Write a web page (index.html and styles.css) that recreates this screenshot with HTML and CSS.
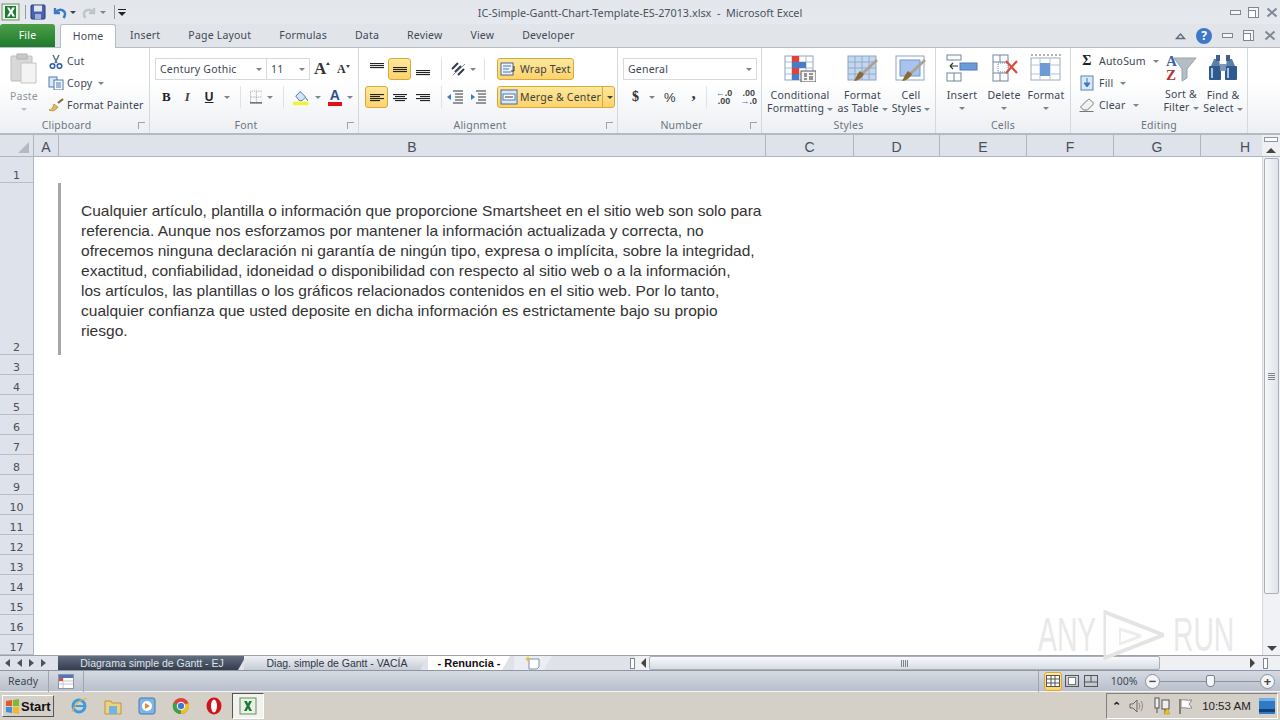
FILE: index.html
```html
<!DOCTYPE html>
<html lang="en">
<head>
    <meta charset="UTF-8">
    <title>IC-Simple-Gantt-Chart-Template-ES-27013.xlsx - Microsoft Excel</title>
    <link rel="stylesheet" href="styles.css">
</head>
<body>
<div class="window">
    <!-- title bar -->
    <div class="titlebar">
        <div class="qat">
            <svg class="excel-logo" width="20" height="18" viewBox="0 0 20 18"><rect x="1" y="1" width="17" height="16" fill="#e8f3e4" stroke="#6f8f6a"/><rect x="4" y="3" width="11" height="12" fill="#1f7a35"/><path d="M6 4.5h2.4l1.4 2.8 1.4-2.8H14l-2.6 4.4 2.7 4.6h-2.5L10 10.500 8.400 13.500H6l2.700-4.600z" fill="#fff"/></svg>
            <span class="qat-sep"></span>
            <svg width="16" height="16" viewBox="0 0 16 16"><rect x="1" y="1" width="14" height="14" rx="1" fill="#4a63b0" stroke="#27397a"/><rect x="4" y="1.500" width="8" height="6" fill="#dfe6f5"/><rect x="5" y="10" width="6" height="5" fill="#9fb0d8"/></svg>
            <svg class="undo" width="15" height="15" viewBox="0 0 15 15"><path d="M3 3v5h5M3.500 7.500C6 4 10.500 3.800 12.500 7c1 2 .5 4-1 6" fill="none" stroke="#3f78c8" stroke-width="2.400"/></svg>
            <span class="caret dark"></span>
            <svg class="gap-left" width="15" height="15" viewBox="0 0 15 15"><path d="M12 3v5H7M11.500 7.500C9 4 4.500 3.800 2.500 7c-1 2-.5 4 1 6" fill="none" stroke="#bcc4cc" stroke-width="2.400"/></svg>
            <span class="caret"></span>
            <span class="qat-sep last"></span>
            <svg width="8" height="7" viewBox="0 0 8 7"><path d="M0 .5h8" stroke="#222"/><path d="M0 3h8L4 7z" fill="#222"/></svg>
        </div>
        <div class="doc-title">IC-Simple-Gantt-Chart-Template-ES-27013.xlsx&nbsp; -&nbsp; Microsoft Excel</div>
        <div class="win-buttons">
            <span class="win-min"></span>
            <span class="win-max"></span>
            <svg width="12" height="11" viewBox="0 0 12 11"><path d="M1.500 1.500l9 8M10.500 1.500l-9 8" stroke="#7c8896" stroke-width="2"/></svg>
        </div>
    </div>

    <!-- ribbon tabs -->
    <div class="tabs">
        <div class="tab file">File</div>
        <div class="tab active">Home</div>
        <div class="tab">Insert</div>
        <div class="tab">Page Layout</div>
        <div class="tab">Formulas</div>
        <div class="tab">Data</div>
        <div class="tab">Review</div>
        <div class="tab">View</div>
        <div class="tab">Developer</div>
        <div class="tab-tools">
            <svg width="11" height="8" viewBox="0 0 11 8"><path d="M1.500 6.500L5.500 2l4 4.500z" fill="none" stroke="#5f6b78" stroke-width="1.400"/></svg>
            <span class="help">?</span>
            <span class="win-min"></span>
            <span class="win-max"></span>
            <svg width="12" height="11" viewBox="0 0 12 11"><path d="M1.500 1.500l9 8M10.500 1.500l-9 8" stroke="#7c8896" stroke-width="2"/></svg>
        </div>
    </div>

    <!-- ribbon -->
    <div class="ribbon">
        <section class="group g-clipboard">
            <div class="group-body">
                <div class="big-btn paste">
                    <svg width="28" height="32" viewBox="0 0 28 32"><rect x="1" y="3" width="21" height="25" rx="1" fill="#d8d8d8" stroke="#bdbdbd"/><rect x="7" y="1" width="10" height="5" fill="#c9c9c9" stroke="#b0b0b0"/><path d="M11 10h15v20H11z" fill="#f3f3f3" stroke="#c4c4c4"/></svg>
                    <span class="big-label muted">Paste</span>
                    <span class="caret"></span>
                </div>
                <div class="small-col">
                    <div class="small-btn">
                        <svg width="14" height="15" viewBox="0 0 14 15"><path d="M4 1l4 8M10 1L6 9" stroke="#5f6f86" stroke-width="1.500"/><circle cx="3.500" cy="12" r="2.300" fill="none" stroke="#2f5fa8" stroke-width="1.600"/><circle cx="10.500" cy="12" r="2.300" fill="none" stroke="#2f5fa8" stroke-width="1.600"/></svg>
                        <span>Cut</span>
                    </div>
                    <div class="small-btn">
                        <svg width="16" height="14" viewBox="0 0 16 14"><rect x="1" y="1" width="8" height="10" fill="#dce8f7" stroke="#4f78b0"/><rect x="6" y="4" width="9" height="10" fill="#f5f9fe" stroke="#4f78b0"/><path d="M8 7h5M8 9h5M8 11h5" stroke="#4f78b0"/></svg>
                        <span>Copy</span><span class="caret"></span>
                    </div>
                    <div class="small-btn">
                        <svg width="16" height="14" viewBox="0 0 16 14"><path d="M10 5l5-4" stroke="#8a6a3a" stroke-width="2.200"/><path d="M1 12c3 0 4-3 5-6l4 3c-2 3-5 5-9 3z" fill="#e3b95a" stroke="#a3813a" stroke-width=".7"/></svg>
                        <span>Format Painter</span>
                    </div>
                </div>
            </div>
            <div class="group-label launch-pad">Clipboard<span class="launcher"></span></div>
        </section>

        <section class="group g-font">
            <div class="group-body stacked">
                <div class="tool-row">
                    <div class="combo font-name"><span>Century Gothic</span><span class="caret"></span></div>
                    <div class="combo font-size"><span>11</span><span class="caret"></span></div>
                    <span class="grow-a big">A<sup class="tick up"></sup></span>
                    <span class="grow-a small">A<sup class="tick"></sup></span>
                </div>
                <div class="tool-row font-tools">
                    <span class="fmt bold">B</span>
                    <span class="fmt italic">I</span>
                    <span class="fmt under">U</span><span class="caret"></span>
                    <span class="sep"></span>
                    <svg width="14" height="14" viewBox="0 0 14 14"><rect x=".5" y=".5" width="13" height="13" fill="none" stroke="#999" stroke-dasharray="1 1"/><path d="M7 1v12M1 7h12" stroke="#999" stroke-dasharray="1 1"/><path d="M0 13.500h14" stroke="#222"/></svg>
                    <span class="caret"></span>
                    <span class="sep"></span>
                    <svg width="18" height="17" viewBox="0 0 18 17"><path d="M3 7l5-5 6 6-4 4H7z" fill="#d5e4f5" stroke="#3f6ea8"/><path d="M14 9c1 1 2 2 2 3" stroke="#3f6ea8"/><rect x="0" y="13" width="17" height="4" fill="#f5f03a"/></svg>
                    <span class="caret"></span>
                    <span class="font-color">A</span>
                    <span class="caret"></span>
                </div>
            </div>
            <div class="group-label launch-pad">Font<span class="launcher"></span></div>
        </section>

        <section class="group g-align">
            <div class="group-body stacked">
                <div class="tool-row align-row">
                    <span class="icon-btn"><span class="lines top"><i></i><i></i><i></i></span></span>
                    <span class="icon-btn on"><span class="lines"><i></i><i></i><i></i></span></span>
                    <span class="icon-btn"><span class="lines bottom"><i></i><i></i><i></i></span></span>
                    <span class="sep"></span>
                    <svg class="orient" width="18" height="16" viewBox="0 0 18 16"><path d="M2 8l6-6M5 11l6-6M8 14l6-6" stroke="#333a48" stroke-width="2"/><path d="M3 14L15 3" stroke="#5b6b80" stroke-width=".8"/></svg>
                    <span class="caret"></span>
                    <span class="sep push"></span>
                    <div class="wide-btn on wrap">
                        <svg width="18" height="16" viewBox="0 0 18 16"><rect x="1" y="2" width="12" height="12" fill="#eef3fa" stroke="#51688a"/><path d="M3 5h8M3 8h6M3 11h8" stroke="#3e7bc4"/><path d="M14 5v5h-3" fill="none" stroke="#333"/></svg>
                        <span>Wrap Text</span>
                    </div>
                </div>
                <div class="tool-row align-row">
                    <span class="icon-btn on"><span class="lines left"><i></i><i></i><i></i><i></i></span></span>
                    <span class="icon-btn"><span class="lines center"><i></i><i></i><i></i><i></i></span></span>
                    <span class="icon-btn"><span class="lines right"><i></i><i></i><i></i><i></i></span></span>
                    <span class="sep tight"></span>
                    <svg width="18" height="14" viewBox="0 0 18 14"><path d="M7 1h10M9 4h8M9 7h8M9 10h8M7 13h10" stroke="#333"/><path d="M1 7l4-3v6z" fill="#3f78c8"/></svg>
                    <svg class="indent" width="18" height="14" viewBox="0 0 18 14"><path d="M7 1h10M9 4h8M9 7h8M9 10h8M7 13h10" stroke="#333"/><path d="M6 7L2 4v6z" fill="#3f78c8"/></svg>
                    <div class="wide-btn on merge">
                        <svg width="18" height="16" viewBox="0 0 18 16"><rect x="1" y="1" width="16" height="14" fill="#dce8f7" stroke="#51688a"/><rect x="3" y="5" width="12" height="6" fill="#fff" stroke="#3e7bc4"/><path d="M5 8h8" stroke="#333"/></svg>
                        <span>Merge &amp; Center</span>
                        <span class="split"><span class="caret dark"></span></span>
                    </div>
                </div>
            </div>
            <div class="group-label launch-pad">Alignment<span class="launcher"></span></div>
        </section>

        <section class="group g-number">
            <div class="group-body stacked">
                <div class="tool-row">
                    <div class="combo number-format"><span>General</span><span class="caret"></span></div>
                </div>
                <div class="tool-row number-tools">
                    <span class="num-sym dollar">$</span><span class="caret"></span>
                    <span class="num-sym percent">%</span>
                    <span class="num-sym comma">,</span>
                    <span class="sep"></span>
                    <span class="decimal"><b class="arrow">&larr;</b>.0<br>.00</span>
                    <span class="decimal">.00<br><b class="arrow">&rarr;</b>.0</span>
                </div>
            </div>
            <div class="group-label launch-pad">Number<span class="launcher"></span></div>
        </section>

        <section class="group g-styles">
            <div class="group-body big-row">
                <div class="big-btn cond">
                    <svg width="32" height="28" viewBox="0 0 32 28"><rect x="1" y="2" width="28" height="24" fill="#fff" stroke="#8ba4c4"/><path d="M1 8h28M1 14h28M1 20h28M8 2v24M15 2v24M22 2v24" stroke="#a8bcd6"/><rect x="8" y="2" width="7" height="6" fill="#e0413a"/><rect x="8" y="8" width="14" height="6" fill="#4a7cc4"/><rect x="8" y="14" width="7" height="6" fill="#e0413a"/><rect x="8" y="20" width="7" height="6" fill="#4a7cc4"/><rect x="17" y="17" width="15" height="11" fill="#f3f3f3" stroke="#555"/><path d="M20 20h3M20 22h3M20 25h3M25 20h4M25 23h4M25 25h4" stroke="#333"/></svg>
                    <span class="big-label">Conditional<br>Formatting <span class="caret"></span></span>
                </div>
                <div class="big-btn table">
                    <svg width="32" height="28" viewBox="0 0 32 28"><rect x="1" y="2" width="28" height="24" fill="#c4d7ef" stroke="#8ba4c4"/><path d="M1 8h28M1 14h28M1 20h28M8 2v24M15 2v24M22 2v24" stroke="#8faacb"/><path d="M31 7L16 21l-2-2L29 5z" fill="#b0a090"/><path d="M17 20c-2 4-6 7-10 7 2-3 3-7 6-10z" fill="#8a6a32"/></svg>
                    <span class="big-label">Format<br>as Table <span class="caret"></span></span>
                </div>
                <div class="big-btn cell-styles">
                    <svg width="32" height="28" viewBox="0 0 32 28"><rect x="1" y="2" width="28" height="24" fill="#fff" stroke="#8ba4c4"/><rect x="5" y="6" width="20" height="16" fill="#a8c4ee" stroke="#6f94cc"/><path d="M31 7L16 21l-2-2L29 5z" fill="#b0a090"/><path d="M17 20c-2 4-6 7-10 7 2-3 3-7 6-10z" fill="#8a6a32"/></svg>
                    <span class="big-label">Cell<br>Styles <span class="caret"></span></span>
                </div>
            </div>
            <div class="group-label">Styles</div>
        </section>

        <section class="group g-cells">
            <div class="group-body big-row">
                <div class="big-btn cell-btn">
                    <svg width="32" height="28" viewBox="0 0 32 28"><rect x="1" y="1" width="14" height="5" fill="#fff" stroke="#70859e"/><rect x="1" y="19" width="14" height="8" fill="#fff" stroke="#70859e"/><path d="M8 19v8" stroke="#70859e"/><rect x="14" y="9" width="17" height="7" fill="#6d9bd8" stroke="#517bb2"/><path d="M4 12h8M4 12l3-3M4 12l3 3" fill="none" stroke="#333" stroke-width="1.200"/></svg>
                    <span class="big-label">Insert</span>
                    <span class="caret"></span>
                </div>
                <div class="big-btn cell-btn">
                    <svg width="32" height="28" viewBox="0 0 32 28"><rect x="5" y="1" width="15" height="26" fill="#fff" stroke="#70859e"/><path d="M5 8h15M5 19h15M12 19v8M12 1v7" stroke="#70859e"/><rect x="10" y="9" width="10" height="9" fill="#fff" stroke="#5b8ac8" stroke-dasharray="1 1"/><path d="M18 7l11 12M29 7L18 19" stroke="#e04a3a" stroke-width="2.200"/></svg>
                    <span class="big-label">Delete</span>
                    <span class="caret"></span>
                </div>
                <div class="big-btn cell-btn">
                    <svg width="32" height="28" viewBox="0 0 32 28"><path d="M1 1h30" stroke="#666" stroke-dasharray="2 2"/><rect x="1" y="4" width="29" height="22" fill="#fff" stroke="#9aaabb"/><path d="M1 11h29M1 20h29M10 4v22M20 4v22" stroke="#b6c3d2"/><rect x="10" y="9" width="10" height="13" fill="#6d9bd8"/></svg>
                    <span class="big-label">Format</span>
                    <span class="caret"></span>
                </div>
            </div>
            <div class="group-label">Cells</div>
        </section>

        <section class="group g-editing">
            <div class="group-body">
                <div class="small-col edit-col">
                    <div class="small-btn">
                        <span class="sigma">&Sigma;</span><span>AutoSum</span><span class="caret"></span>
                    </div>
                    <div class="small-btn">
                        <svg width="14" height="16" viewBox="0 0 14 16"><rect x="1" y="1" width="12" height="14" fill="#dce8f7" stroke="#5b84ba"/><path d="M7 3v6M4 8h6l-3 4z" fill="#3f78c8" stroke="#3f78c8"/></svg>
                        <span>Fill</span><span class="caret"></span>
                    </div>
                    <div class="small-btn">
                        <svg width="15" height="14" viewBox="0 0 15 14"><path d="M1 9l7-7c1-1 2-1 3 0l2 2c1 1 1 2 0 3l-5 5H4z" fill="#f1f1f1" stroke="#777"/><path d="M0 13.500h14" stroke="#777"/></svg>
                        <span>Clear</span><span class="caret"></span>
                    </div>
                </div>
                <div class="big-btn sort">
                    <svg width="32" height="30" viewBox="0 0 32 30"><path d="M9 5h22l-9 11v9l-5 3V16z" fill="#b4bcc4" stroke="#9aa3ac"/><text x="1" y="13" class="az a">A</text><text x="1" y="27" class="az z">Z</text></svg>
                    <span class="big-label">Sort &amp;<br>Filter <span class="caret"></span></span>
                </div>
                <div class="big-btn find">
                    <svg width="30" height="28" viewBox="0 0 30 28"><path d="M3 12l3-7h5l1 7zM18 12l1-7h5l3 7z" fill="#5d7fa8"/><rect x="8" y="1" width="4" height="6" fill="#3f5f8a"/><rect x="18" y="1" width="4" height="6" fill="#3f5f8a"/><rect x="1" y="12" width="12" height="14" rx="1" fill="#2f5a8e"/><rect x="17" y="12" width="12" height="14" rx="1" fill="#2f5a8e"/><rect x="12" y="10" width="6" height="7" fill="#7d97b8"/><path d="M4 14v10M20 14v10" stroke="#a8c4e4" stroke-width="2"/></svg>
                    <span class="big-label">Find &amp;<br>Select <span class="caret"></span></span>
                </div>
            </div>
            <div class="group-label">Editing</div>
        </section>
    </div>

    <!-- column headers -->
    <div class="col-headers">
        <div class="corner"><span class="corner-mark"></span></div>
        <div class="col col-a">A</div>
        <div class="col col-b">B</div>
        <div class="col col-c">C</div>
        <div class="col col-d">D</div>
        <div class="col col-e">E</div>
        <div class="col col-f">F</div>
        <div class="col col-g">G</div>
        <div class="col col-h">H</div>
        <div class="v-scroll-head"><span class="split-bar"></span><span class="arrow-up"></span></div>
    </div>

    <!-- sheet -->
    <div class="sheet-area">
        <div class="row-headers">
            <div class="rh r1">1</div>
            <div class="rh r2">2</div>
            <div class="rh">3</div>
            <div class="rh">4</div>
            <div class="rh">5</div>
            <div class="rh">6</div>
            <div class="rh">7</div>
            <div class="rh">8</div>
            <div class="rh">9</div>
            <div class="rh">10</div>
            <div class="rh">11</div>
            <div class="rh">12</div>
            <div class="rh">13</div>
            <div class="rh">14</div>
            <div class="rh">15</div>
            <div class="rh">16</div>
            <div class="rh">17</div>
        </div>
        <div class="cells">
            <div class="disclaimer">
                Cualquier artículo, plantilla o información que proporcione Smartsheet en el sitio web son solo para<br>
                referencia. Aunque nos esforzamos por mantener la información actualizada y correcta, no<br>
                ofrecemos ninguna declaración ni garantía de ningún tipo, expresa o implícita, sobre la integridad,<br>
                exactitud, confiabilidad, idoneidad o disponibilidad con respecto al sitio web o a la información,<br>
                los artículos, las plantillas o los gráficos relacionados contenidos en el sitio web. Por lo tanto,<br>
                cualquier confianza que usted deposite en dicha información es estrictamente bajo su propio<br>
                riesgo.
            </div>
        </div>
        <div class="v-scroll">
            <div class="v-thumb"><span class="grip"></span></div>
            <span class="arrow-down"></span>
        </div>
        <div class="watermark">
            <span>ANY</span>
            <svg width="130" height="52" viewBox="0 0 130 52"><path d="M14 3l100 23L14 49z" fill="none" stroke="#e4e4e4" stroke-width="4"/><path d="M40 20l36 7-36 8z" fill="none" stroke="#ececec" stroke-width="3"/></svg>
            <span>RUN</span>
        </div>
    </div>

    <!-- sheet tabs and horizontal scroll -->
    <div class="sheet-tabs">
        <div class="tab-nav">
            <span class="nav first"></span>
            <span class="nav prev"></span>
            <span class="nav next"></span>
            <span class="nav last"></span>
        </div>
        <div class="stab dark">Diagrama simple de Gantt - EJ</div>
        <div class="stab light">Diag. simple de Gantt - VACÍA</div>
        <div class="stab current">- Renuncia -</div>
        <div class="stab new-sheet">
            <svg width="16" height="14" viewBox="0 0 16 14"><path d="M4 3h10v8l-2 2H4z" fill="#fff" stroke="#7f93ab"/><path d="M3 0l1 2 2 1-2 1-1 2-1-2-2-1 2-1z" fill="#e8b93a"/></svg>
        </div>
        <div class="tab-fill"><span class="split-handle"></span></div>
        <div class="h-scroll">
            <span class="arrow-left"></span>
            <div class="h-thumb"><span class="grip-v"></span></div>
            <span class="h-track"></span>
            <span class="arrow-right"></span>
            <span class="split-handle"></span>
        </div>
    </div>

    <!-- status bar -->
    <div class="statusbar">
        <span class="status-text">Ready</span>
        <span class="status-sep"></span>
        <svg class="macro" width="16" height="15" viewBox="0 0 16 15"><rect x=".5" y=".5" width="15" height="14" fill="#fff" stroke="#8a97a8"/><rect x="1" y="1" width="14" height="3" fill="#4f78b0"/><path d="M5 4v10M1 7h14M1 10h14" stroke="#c0c8d4"/><rect x="1" y="4" width="4" height="3" fill="#e04a3a"/></svg>
        <span class="status-sep"></span>
        <span class="status-spring"></span>
        <span class="status-sep"></span>
        <span class="view-btn on"><svg width="14" height="12" viewBox="0 0 14 12"><rect x=".5" y=".5" width="13" height="11" fill="#fff" stroke="#555"/><path d="M5 0v12M9 0v12M0 4h14M0 8h14" stroke="#555"/></svg></span>
        <span class="view-btn"><svg width="14" height="12" viewBox="0 0 14 12"><rect x=".5" y=".5" width="13" height="11" fill="none" stroke="#555"/><rect x="3.500" y="2.500" width="7" height="7" fill="#fff" stroke="#777"/></svg></span>
        <span class="view-btn"><svg width="14" height="12" viewBox="0 0 14 12"><rect x=".5" y=".5" width="13" height="11" fill="none" stroke="#555"/><path d="M7 0v7M0 7h14" stroke="#555"/></svg></span>
        <span class="zoom-text">100%</span>
        <span class="zoom-round">&minus;</span>
        <span class="zoom-slider"><span class="zoom-thumb"></span></span>
        <span class="zoom-round">+</span>
    </div>

    <!-- windows taskbar -->
    <div class="taskbar">
        <div class="start">
            <svg width="15" height="15" viewBox="0 0 15 15"><path d="M1 2l6-1v6H1z" fill="#e8562a"/><path d="M8 1l6-1v7H8z" fill="#7fba2a"/><path d="M1 8h6v6l-6-1z" fill="#3f8ee0"/><path d="M8 8h6v7l-6-1z" fill="#f0b92a"/></svg>
            <span>Start</span>
        </div>
        <div class="launch">
            <svg width="18" height="18" viewBox="0 0 18 18"><circle cx="9" cy="9" r="6" fill="none" stroke="#3f9be0" stroke-width="3"/><path d="M4 9h10" stroke="#3f9be0" stroke-width="2"/><path d="M2 15C6 5 12 1 17 2" fill="none" stroke="#e8b93a" stroke-width="1.200"/></svg>
            <svg width="18" height="18" viewBox="0 0 18 18"><path d="M1 4h6l1 2h9v11H1z" fill="#f0d27a" stroke="#b8954a"/><rect x="5" y="9" width="8" height="8" fill="#6fb4e4"/></svg>
            <svg width="18" height="18" viewBox="0 0 18 18"><rect x="1" y="1" width="16" height="16" rx="2" fill="#7fb4e8" stroke="#4a78b0"/><circle cx="9" cy="9" r="5" fill="#fff"/><path d="M7 6l5 3-5 3z" fill="#e8892a"/></svg>
            <svg width="18" height="18" viewBox="0 0 18 18"><circle cx="9" cy="9" r="8" fill="#e0413a"/><path d="M9 9L16.500 6A8 8 0 0 1 9 17z" fill="#e8c32a"/><path d="M9 9L9 17A8 8 0 0 1 1.500 5.500z" fill="#3fa04a"/><circle cx="9" cy="9" r="3.800" fill="#3f78d0" stroke="#fff"/></svg>
            <svg width="16" height="18" viewBox="0 0 16 18"><ellipse cx="8" cy="9" rx="7.500" ry="8.500" fill="#d0141c"/><ellipse cx="8" cy="9" rx="3" ry="6.500" fill="#fff"/></svg>
            <div class="task-item">
                <svg width="18" height="18" viewBox="0 0 18 18"><rect x="1" y="1" width="16" height="16" fill="#e8f3e4" stroke="#5f8f5a"/><path d="M5 4h2.800L9 6.500 10.300 4H13l-2.600 5 2.700 5h-2.700L9 11.500 7.600 14H5l2.600-5z" fill="#1f7a35"/></svg>
            </div>
        </div>
        <div class="tray">
            <span class="tray-up">&#8963;</span>
            <svg width="16" height="16" viewBox="0 0 16 16"><path d="M1 6h3l4-4v12l-4-4H1z" fill="none" stroke="#666"/><path d="M10 5c1 2 1 4 0 6M12 3c2 3 2 7 0 10" fill="none" stroke="#888"/></svg>
            <svg width="16" height="18" viewBox="0 0 16 18"><rect x="1" y="1" width="4" height="10" fill="#eee" stroke="#555"/><rect x="8" y="3" width="7" height="9" fill="#eee" stroke="#555"/><path d="M3 11v5M11 12v4" stroke="#555"/><path d="M10 17l3-6 3 6z" fill="#f0c22a" stroke="#a88a1a" stroke-width=".5"/></svg>
            <svg width="16" height="16" viewBox="0 0 16 16"><path d="M2 1v15" stroke="#666" stroke-width="1.500"/><path d="M3 2c4-1 6 1 11 0l-3 4 3 4c-5 1-7-1-11 0z" fill="#fff" stroke="#888"/></svg>
            <span class="clock">10:53 AM</span>
            <svg class="show-desk" width="16" height="16" viewBox="0 0 16 16"><rect width="16" height="16" fill="#2f7ac4"/><rect y="11" width="16" height="3" fill="#123f78"/><rect y="0" width="16" height="3" fill="#6fb0e4"/></svg>
        </div>
    </div>
</div>
</body>
</html>
```

FILE: styles.css
```css
* {
    box-sizing: border-box;
}
html, body {
    margin: 0;
    height: 720px;
    overflow: hidden;
}
body {
    background: #fff;
    font-family: "Noto Sans", sans-serif;
    font-size: 11px;
    color: #3c4654;
}
.window {
    width: 1280px;
    height: 720px;
    display: flex;
    flex-direction: column;
}

/* shared small bits */
.caret {
    display: inline-block;
    width: 0;
    height: 0;
    border-left: 3px solid transparent;
    border-right: 3px solid transparent;
    border-top: 3px solid #7b8590;
    vertical-align: middle;
}
.caret.dark {
    border-top-color: #39424e;
}
.sep {
    width: 1px;
    height: 22px;
    background: #dfe3e8;
}

/* title bar */
.titlebar {
    height: 24px;
    display: flex;
    align-items: center;
    background: linear-gradient(#e3e7ec, #e6e9ee);
}
.qat {
    width: 210px;
    display: flex;
    align-items: center;
    gap: 3px;
    padding-left: 1px;
}
.qat-sep {
    width: 1px;
    height: 14px;
    background: #8f99a5;
    margin: 0 1px;
}
.qat-sep.last {
    margin: 0 0 0 5px;
}
.undo {
    margin-left: 3px;
}
.gap-left {
    margin-left: 3px;
}
.doc-title {
    flex: 1;
    text-align: center;
    font-size: 10.800px;
    color: #4a525e;
}
.win-buttons {
    width: 210px;
    display: flex;
    justify-content: flex-end;
    align-items: center;
    gap: 7px;
    padding-right: 2px;
}
.win-min {
    width: 11px;
    height: 5px;
    border: 1px solid #7c8896;
    background: #f4f6f8;
}
.win-max {
    width: 11px;
    height: 11px;
    border: 1px solid #7c8896;
    background: #f4f6f8;
    position: relative;
}
.win-max::after {
    content: "";
    position: absolute;
    left: 0;
    bottom: 0;
    width: 6px;
    height: 6px;
    border-top: 1px solid #7c8896;
    border-right: 1px solid #7c8896;
    background: #fff;
}

/* ribbon tabs */
.tabs {
    height: 24px;
    display: flex;
    align-items: flex-end;
    background: #e1e5ea;
    border-bottom: 1px solid #b7bdc5;
}
.tab {
    height: 23px;
    line-height: 23px;
    padding: 0 14px;
    font-size: 10.500px;
    letter-spacing: .2px;
    color: #3f4955;
}
.tab.file {
    width: 55px;
    padding: 0;
    margin-right: 5px;
    text-align: center;
    color: #fff;
    border-radius: 3px 3px 0 0;
    background: linear-gradient(#4e9e4a, #1d7a2c);
}
.tab.active {
    width: 56px;
    padding: 0;
    margin-right: 0;
    margin-bottom: -1px;
    height: 24px;
    text-align: center;
    background: #fff;
    border: 1px solid #b7bdc5;
    border-bottom: none;
    border-radius: 3px 3px 0 0;
}
.tab-tools {
    margin-left: auto;
    height: 23px;
    display: flex;
    align-items: center;
    gap: 10px;
    padding-right: 4px;
}
.help {
    width: 16px;
    height: 16px;
    border-radius: 50%;
    background: #3f78c8;
    color: #fff;
    font-size: 12px;
    font-weight: 700;
    line-height: 16px;
    text-align: center;
}

/* ribbon */
.ribbon {
    height: 87px;
    display: flex;
    background: linear-gradient(#fff 40%, #eceff3);
    border-bottom: 2px solid #b4bac2;
}
.group {
    display: flex;
    flex-direction: column;
    border-right: 1px solid #d5d9de;
}
.group-body {
    height: 71px;
    display: flex;
}
.group-label {
    height: 14px;
    line-height: 13px;
    text-align: center;
    font-size: 10.500px;
    letter-spacing: .2px;
    color: #6a7480;
    position: relative;
}
.launch-pad {
    padding-right: 16px;
}
.launcher {
    position: absolute;
    right: 4px;
    top: 3px;
    width: 7px;
    height: 7px;
    border: 1px solid #9aa4b0;
    border-width: 1px 0 0 1px;
}
.g-clipboard { width: 150px; }
.g-font { width: 209px; }
.g-align { width: 259px; }
.g-number { width: 144px; }
.g-styles { width: 174px; }
.g-cells { width: 135px; }
.g-editing { width: 177px; border-right: 1px solid #d5d9de; }

.stacked {
    flex-direction: column;
    gap: 6px;
    padding-top: 10px;
}
.tool-row {
    height: 22px;
    display: flex;
    align-items: center;
}

.big-btn {
    display: flex;
    flex-direction: column;
    align-items: center;
}
.big-label {
    text-align: center;
    line-height: 13px;
    font-size: 10.500px;
    letter-spacing: .2px;
    white-space: nowrap;
}
.big-label.muted {
    color: #8d949d;
}
.paste {
    width: 48px;
    padding-top: 5px;
}
.paste svg {
    margin-bottom: 5px;
}
.paste .caret {
    margin-top: 5px;
    border-top-color: #b9bec4;
}
.small-col {
    display: flex;
    flex-direction: column;
    gap: 6px;
    padding-top: 5px;
}
.small-btn {
    height: 16px;
    display: flex;
    align-items: center;
    gap: 3px;
    white-space: nowrap;
    font-size: 10.500px;
    letter-spacing: .2px;
}
.small-btn svg {
    width: 16px;
}
.small-btn .caret {
    margin-left: 3px;
}

/* font group */
.g-font .tool-row {
    padding-left: 5px;
}
.combo {
    height: 22px;
    display: flex;
    align-items: center;
    justify-content: space-between;
    padding: 0 4px;
    border: 1px solid #d6dae0;
    background: #fff;
    font-size: 10.500px;
    letter-spacing: .2px;
}
.font-name { width: 112px; }
.font-size { width: 44px; margin-left: -1px; }
.grow-a {
    font-family: "Liberation Serif", serif;
    font-weight: 700;
    color: #333;
    display: flex;
}
.grow-a.big {
    font-size: 17px;
    margin-left: 4px;
    width: 20px;
}
.grow-a.small {
    font-size: 12px;
    margin-left: 3px;
}
.tick {
    width: 0;
    height: 0;
    margin-top: 3px;
    border-left: 2.500px solid transparent;
    border-right: 2.500px solid transparent;
    border-top: 3px solid #3c4654;
}
.tick.up {
    border-top: none;
    border-bottom: 3px solid #3c4654;
}
.g-font .font-tools {
    gap: 0;
    padding-left: 6px;
}
.fmt {
    width: 23px;
    text-align: center;
    font-family: "Liberation Serif", serif;
    font-size: 13px;
    color: #222;
}
.fmt.bold { font-weight: 700; }
.fmt.italic { font-style: italic; font-weight: 700; color: #444; }
.fmt.under { text-decoration: underline; font-weight: 700; font-family: "Liberation Sans", sans-serif; font-size: 12px; padding-left: 2px; }
.font-tools .caret { margin: 0 5px; }
.font-tools .sep { margin: 0 9px 0 5px; }
.font-color {
    width: 16px;
    margin-left: 2px;
    border-bottom: 4px solid #e0101c;
    line-height: 13px;
    text-align: center;
    font-family: "Liberation Sans", sans-serif;
    font-weight: 700;
    font-size: 14px;
    color: #2f4f8e;
}

/* alignment group */
.align-row {
    padding-left: 6px;
}
.icon-btn {
    width: 23px;
    height: 22px;
    display: flex;
    align-items: center;
    justify-content: center;
    border: 1px solid transparent;
}
.on {
    border: 1px solid #d8a93a;
    border-radius: 3px;
    background: linear-gradient(#fde89c, #fcd36a);
}
.lines {
    width: 14px;
    height: 12px;
    display: flex;
    flex-direction: column;
    gap: 1px;
    justify-content: center;
    align-items: center;
}
.lines.top { justify-content: flex-start; }
.lines.bottom { justify-content: flex-end; }
.lines.left { align-items: flex-start; }
.lines.right { align-items: flex-end; }
.lines i {
    display: block;
    width: 14px;
    height: 1px;
    background: #222;
    box-shadow: 0 1px 0 rgba(0, 0, 0, .1);
}
.lines.left i:nth-child(even),
.lines.center i:nth-child(even),
.lines.right i:nth-child(even) {
    width: 10px;
}
.align-row .sep { margin: 0 7px; }
.align-row .sep.tight { margin: 0 4px 0 7px; }
.align-row .caret { margin-left: 2px; }
.orient { margin-left: 1px; }
.align-row .sep.push { margin: 0 12px 0 8px; }
.indent { margin-left: 5px; }
.wide-btn {
    height: 22px;
    display: flex;
    align-items: center;
    gap: 2px;
    padding-left: 2px;
    font-size: 10.500px;
    letter-spacing: .2px;
    color: #3a3f48;
    white-space: nowrap;
}
.wrap {
    width: 77px;
}
.merge {
    width: 118px;
    margin-left: 10px;
    position: relative;
}
.split {
    position: absolute;
    right: 0;
    top: 0;
    bottom: 0;
    width: 12px;
    border-left: 1px solid #d8a93a;
    display: flex;
    align-items: center;
    justify-content: center;
}

/* number group */
.g-number .tool-row {
    padding-left: 5px;
}
.number-format {
    width: 134px;
}
.num-sym {
    font-family: "Liberation Serif", serif;
    font-size: 14px;
    font-weight: 700;
    color: #333;
}
.dollar { margin-left: 9px; }
.number-tools .caret { margin: 0 0 0 10px; }
.percent { margin-left: 9px; font-weight: 400; font-family: "Liberation Sans", sans-serif; font-size: 13px; }
.comma { margin-left: 16px; margin-top: -7px; font-size: 17px; }
.number-tools .sep { margin: 0 5px 0 10px; }
.decimal {
    width: 26px;
    font-size: 9px;
    line-height: 8px;
    font-weight: 700;
    font-family: "Liberation Sans", sans-serif;
    color: #444;
    text-align: center;
}
.arrow { color: #3f78c8; }

/* large button groups */
.big-row {
    padding-top: 6px;
}
.big-btn svg {
    flex: none;
}
.cond { width: 72px; margin-left: 2px; padding-top: 0; }
.table { width: 53px; margin-left: 0; }
.cell-styles { width: 44px; margin-left: 0; }
.cond .big-label, .table .big-label, .cell-styles .big-label,
.sort .big-label, .find .big-label, .cell-btn .big-label {
    margin-top: 7px;
}
.cell-btn {
    width: 42px;
}
.g-cells .big-row {
    padding-left: 5px;
}
.cell-btn .caret {
    margin-top: 5px;
}
.edit-col {
    width: 89px;
    padding-left: 8px;
}
.edit-col .small-btn {
    gap: 4px;
}
.sigma {
    width: 16px;
    font-family: "Liberation Serif", serif;
    font-weight: 700;
    font-size: 14px;
    color: #222;
    text-align: center;
}
.sort {
    width: 42px;
    padding-top: 5px;
}
.find {
    width: 42px;
    padding-top: 6px;
}
.sort .big-label {
    margin-top: 5px;
}
.az {
    font-family: "Liberation Serif", serif;
    font-weight: 700;
    font-size: 15px;
}
.az.a { fill: #3f5fa8; }
.az.z { fill: #b0342c; }

/* column headers */
.col-headers {
    height: 22px;
    display: flex;
    background: #dee2ea;
    border-bottom: 1px solid #b0b6bf;
    font-family: "Liberation Sans", sans-serif;
    font-size: 14px;
    color: #4a4f58;
}
.corner {
    width: 34px;
    border-right: 1px solid #b0b6bf;
    position: relative;
}
.corner-mark {
    position: absolute;
    right: 4px;
    bottom: 3px;
    width: 0;
    height: 0;
    border-left: 11px solid transparent;
    border-bottom: 11px solid #b5bac2;
}
.col {
    line-height: 24px;
    text-align: center;
    border-right: 1px solid #b0b6bf;
}
.col-a { width: 25px; }
.col-b { width: 707px; }
.col-c { width: 88px; }
.col-d { width: 86px; }
.col-e { width: 87px; }
.col-f { width: 87px; }
.col-g { width: 87px; }
.col-h { width: 61px; border-right: none; text-align: right; padding-right: 12px; }
.v-scroll-head {
    width: 18px;
    background: #eef0f4;
    display: flex;
    flex-direction: column;
    align-items: center;
    padding-top: 2px;
    gap: 6px;
}
.split-bar {
    width: 14px;
    height: 5px;
    border: 1px solid #9098a2;
    background: #fff;
}
.arrow-up {
    width: 0;
    height: 0;
    border-left: 5px solid transparent;
    border-right: 5px solid transparent;
    border-bottom: 5px solid #444;
}

/* sheet */
.sheet-area {
    height: 498px;
    display: flex;
    position: relative;
    background: #fff;
}
.row-headers {
    width: 34px;
    background: #dee2ea;
    border-right: 1px solid #b0b6bf;
    display: flex;
    flex-direction: column;
    font-family: "DejaVu Sans", sans-serif;
    font-size: 11px;
    color: #4a4f58;
}
.rh {
    height: 20px;
    flex: none;
    display: flex;
    align-items: flex-end;
    justify-content: center;
    border-bottom: 1px solid #b8bec7;
}
.rh.r1 { height: 26px; }
.rh.r2 { height: 172px; }
.cells {
    flex: 1;
    padding: 26px 0 0 24px;
}
.disclaimer {
    height: 172px;
    padding: 18px 0 0 20px;
    border-left: 3px solid #a6a6a6;
    font-family: "Liberation Sans", sans-serif;
    font-size: 15.530px;
    line-height: 20px;
    color: #333;
    white-space: nowrap;
}
.v-scroll {
    width: 18px;
    margin-right: 0;
    background: #f0f2f5;
    border-left: 1px solid #d6dae0;
    display: flex;
    flex-direction: column;
    align-items: center;
    justify-content: space-between;
    padding: 1px 0 4px;
}
.v-thumb {
    width: 15px;
    height: 436px;
    border: 1px solid #a8b0ba;
    border-radius: 2px;
    background: linear-gradient(90deg, #f6f7f9, #e0e4ea);
    display: flex;
    align-items: center;
    justify-content: center;
}
.grip {
    width: 7px;
    height: 7px;
    background: repeating-linear-gradient(#7a828c 0 1px, transparent 1px 2px);
}
.arrow-down {
    width: 0;
    height: 0;
    border-left: 5px solid transparent;
    border-right: 5px solid transparent;
    border-top: 5px solid #444;
}
/* stock browser watermark, squeezed to the narrow lettering */
.watermark {
    position: absolute;
    left: 1038px;
    top: 452px;
    display: flex;
    align-items: center;
    gap: 0;
    font-family: "Liberation Sans", sans-serif;
    font-size: 48px;
    line-height: 48px;
    color: #e9e9e9;
    transform: scaleX(.59);
    transform-origin: left center;
}

/* sheet tabs */
.sheet-tabs {
    height: 15px;
    display: flex;
    align-items: stretch;
    background: #dfe3e9;
    border-top: 1px solid #9aa2ac;
    font-family: "Liberation Sans", sans-serif;
    font-size: 10.500px;
}
.tab-nav {
    width: 58px;
    display: flex;
    align-items: center;
    gap: 7px;
    padding-left: 5px;
}
.nav {
    width: 0;
    height: 0;
    border-top: 4px solid transparent;
    border-bottom: 4px solid transparent;
}
.nav.first, .nav.prev { border-right: 5px solid #4a525e; }
.nav.next, .nav.last { border-left: 5px solid #4a525e; }
.stab {
    line-height: 14px;
    text-align: center;
    white-space: nowrap;
    clip-path: polygon(0 0, 100% 0, calc(100% - 8px) 100%, 0 100%);
}
.stab.dark {
    width: 188px;
    background: linear-gradient(#626d80, #333d4e);
    color: #dfe3e9;
}
.stab.light {
    width: 184px;
    margin-left: -2px;
    padding-left: 2px;
    background: linear-gradient(#eef1f5, #c6ccd6);
    color: #2f3640;
}
.stab.current {
    width: 82px;
    background: #fff;
    color: #111;
    font-weight: 700;
    font-size: 11px;
}
.stab.new-sheet {
    width: 38px;
    margin-left: 4px;
    padding-top: 0;
    background: #eaedf1;
}
.tab-fill {
    width: 83px;
    display: flex;
    justify-content: flex-end;
    align-items: center;
}
.split-handle {
    width: 5px;
    height: 11px;
    border: 1px solid #7f8994;
    background: #fff;
}
.h-scroll {
    flex: 1;
    display: flex;
    align-items: center;
    background: #eef0f4;
    padding: 0 12px 0 6px;
}
.arrow-left {
    width: 0;
    height: 0;
    border-top: 5px solid transparent;
    border-bottom: 5px solid transparent;
    border-right: 5px solid #444;
    margin-right: 3px;
}
.h-thumb {
    width: 511px;
    height: 14px;
    border: 1px solid #a8b0ba;
    border-radius: 2px;
    background: linear-gradient(#f8f9fb, #d7dce3);
    display: flex;
    align-items: center;
    justify-content: center;
}
.grip-v {
    width: 7px;
    height: 7px;
    background: repeating-linear-gradient(90deg, #7a828c 0 1px, transparent 1px 2px);
}
.h-track {
    flex: 1;
}
.arrow-right {
    width: 0;
    height: 0;
    border-top: 5px solid transparent;
    border-bottom: 5px solid transparent;
    border-left: 5px solid #444;
    margin-right: 8px;
}

/* status bar */
.statusbar {
    height: 22px;
    display: flex;
    align-items: center;
    background: linear-gradient(#d5dae2, #b9c0cb);
    border-top: 1px solid #8d96a2;
    border-bottom: 1px solid #f4f5f7;
    font-size: 10.500px;
    color: #3f4955;
}
.status-text {
    width: 48px;
    padding-left: 8px;
}
.status-sep {
    width: 1px;
    height: 21px;
    background: #9ea6b1;
}
.macro {
    margin: 0 9px 0 9px;
}
.status-spring {
    flex: 1;
}
.view-btn {
    width: 18px;
    height: 19px;
    margin-left: 1px;
    display: flex;
    align-items: center;
    justify-content: center;
}
.view-btn.on {
    margin-left: 5px;
}
.zoom-text {
    width: 42px;
    text-align: center;
    margin-left: 3px;
}
.zoom-round {
    width: 15px;
    height: 15px;
    border-radius: 50%;
    border: 1px solid #8a929d;
    background: #f3f4f6;
    line-height: 12px;
    text-align: center;
    font-size: 13px;
    font-weight: 700;
    color: #444;
}
.zoom-slider {
    width: 100px;
    height: 1px;
    background: #8a929d;
    position: relative;
}
.zoom-thumb {
    position: absolute;
    left: 46px;
    top: -6px;
    width: 9px;
    height: 12px;
    border: 1px solid #77808b;
    border-radius: 2px 2px 4px 4px;
    background: #f5f6f8;
}
.statusbar .zoom-round:last-child {
    margin-right: 5px;
}

/* taskbar */
.taskbar {
    height: 28px;
    display: flex;
    align-items: center;
    background: #d4d0c8;
    padding: 0 2px 0 2px;
}
.start {
    width: 52px;
    height: 22px;
    display: flex;
    align-items: center;
    gap: 1px;
    padding-left: 2px;
    font-family: "Liberation Sans", sans-serif;
    font-weight: 700;
    font-size: 13px;
    color: #111;
    border: 1px solid;
    border-color: #fff #555 #555 #fff;
}
.launch {
    display: flex;
    align-items: center;
    gap: 16px;
    margin-left: 16px;
}
.task-item {
    width: 32px;
    height: 26px;
    background: #f4f2ee;
    border: 1px solid;
    border-color: #555 #fff #fff #555;
    display: flex;
    align-items: center;
    justify-content: center;
    margin-left: -6px;
}
.tray {
    margin-left: auto;
    width: 172px;
    height: 26px;
    display: flex;
    align-items: center;
    justify-content: space-between;
    padding: 0 2px 0 5px;
    border: 1px solid;
    border-color: #808080 #fff #fff #808080;
    font-family: "Liberation Sans", sans-serif;
    font-size: 11.500px;
    color: #222;
}
.tray-up {
    font-size: 11px;
    font-weight: 700;
}
.clock {
    white-space: nowrap;
}
```
